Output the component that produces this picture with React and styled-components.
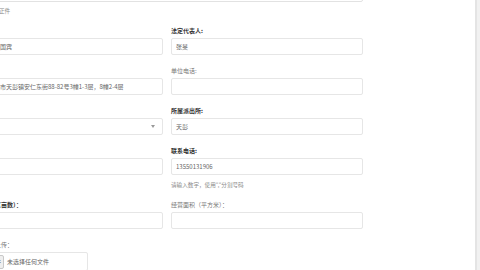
import React from 'react';
import styled, { createGlobalStyle } from 'styled-components';

const GlobalStyle = createGlobalStyle`
  html, body {
    margin: 0;
    padding: 0;
    background: #fff;
  }
  body {
    font-family: "Noto Sans CJK SC", "Noto Sans", sans-serif;
  }
`;

const Page = styled.div`
  display: flex;
  width: 480px;
  height: 270px;
  overflow: hidden;
  background: #fff;
`;

const Content = styled.div`
  flex: 1;
  overflow: hidden;
`;

const ScrollTrack = styled.div`
  width: 3px;
  border-left: 2px solid #e4e4e4;
  background: #f1f1f1;
`;

const Form = styled.div`
  width: 392px;
  margin-left: -29px;
`;

const WideInput = styled.div`
  box-sizing: border-box;
  height: 17px;
  margin-top: -15px;
  border: 1px solid #e2e2e2;
  border-radius: 2px;
`;

const Hint = styled.div`
  margin-top: ${(p) => p.$top || 0}px;
  font-size: 5.6px;
  line-height: 8px;
  color: #8a8a8a;
  white-space: nowrap;
`;

const Grid = styled.div`
  display: grid;
  grid-template-columns: 192px 192px;
  column-gap: 8px;
  row-gap: 12px;
  margin-top: 12px;
`;

const Field = styled.div`
  display: flex;
  flex-direction: column;
  min-width: 0;
`;

const Label = styled.div`
  font-size: 6px;
  line-height: 8px;
  height: 8px;
  margin-bottom: 3px;
  white-space: nowrap;
  color: ${(p) => (p.$required ? '#333' : '#777')};
  font-weight: ${(p) => (p.$required ? 700 : 400)};
`;

const Input = styled.div`
  box-sizing: border-box;
  height: 17px;
  padding: 0 4px;
  border: 1px solid #e6e6e6;
  border-radius: 2px;
  display: flex;
  align-items: center;
  font-size: 6px;
  color: #666;
  white-space: nowrap;
  overflow: hidden;
`;

const Caret = styled.span`
  margin-left: auto;
  margin-right: 3px;
  width: 0;
  height: 0;
  border-left: 2.5px solid transparent;
  border-right: 2.5px solid transparent;
  border-top: 3px solid #999;
`;

const FileBox = styled.div`
  box-sizing: border-box;
  width: 117px;
  height: 19px;
  padding: 0 2px;
  border: 1px solid #e6e6e6;
  border-radius: 2px;
  display: flex;
  align-items: center;
  gap: 3px;
  font-size: 6px;
  color: #666;
  white-space: nowrap;
`;

const FileButton = styled.span`
  box-sizing: border-box;
  width: 30px;
  height: 14px;
  display: flex;
  align-items: center;
  justify-content: center;
  background: #efefef;
  border: 1px solid #c8c8c8;
  border-radius: 2px;
  color: #333;
`;

const App = () => {
  return (
    <>
      <GlobalStyle />
      <Page>
        <Content>
          <Form>
            <WideInput />
            <Hint $top={5}>请上传执照正件</Hint>
            <Grid>
              <Field>
                <Label $required>名称：</Label>
                <Input>彭州天彭国宾</Input>
              </Field>
              <Field>
                <Label $required>法定代表人:</Label>
                <Input>张旻</Input>
              </Field>

              <Field>
                <Label $required>地址：</Label>
                <Input>四川彭州市天彭镇安仁东街88-82号3幢1-3层，8幢2-4层</Input>
              </Field>
              <Field>
                <Label>单位电话:</Label>
                <Input />
              </Field>

              <Field>
                <Label $required>所属区域：</Label>
                <Input>
                  <Caret />
                </Input>
              </Field>
              <Field>
                <Label $required>所属派出所:</Label>
                <Input>天彭</Input>
              </Field>

              <Field>
                <Label $required>邮箱：</Label>
                <Input />
              </Field>
              <Field>
                <Label $required>联系电话:</Label>
                <Input>13550131906</Input>
                <Hint $top={6}>请输入数字，使用","分割号码</Hint>
              </Field>

              <Field>
                <Label $required>占地面积（亩数）：</Label>
                <Input />
              </Field>
              <Field>
                <Label>经营面积（平方米）：</Label>
                <Input />
              </Field>

              <Field>
                <Label>营业执照上传：</Label>
                <FileBox>
                  <FileButton>选择文件</FileButton>
                  未选择任何文件
                </FileBox>
              </Field>
            </Grid>
          </Form>
        </Content>
        <ScrollTrack />
      </Page>
    </>
  );
};

export default App;
